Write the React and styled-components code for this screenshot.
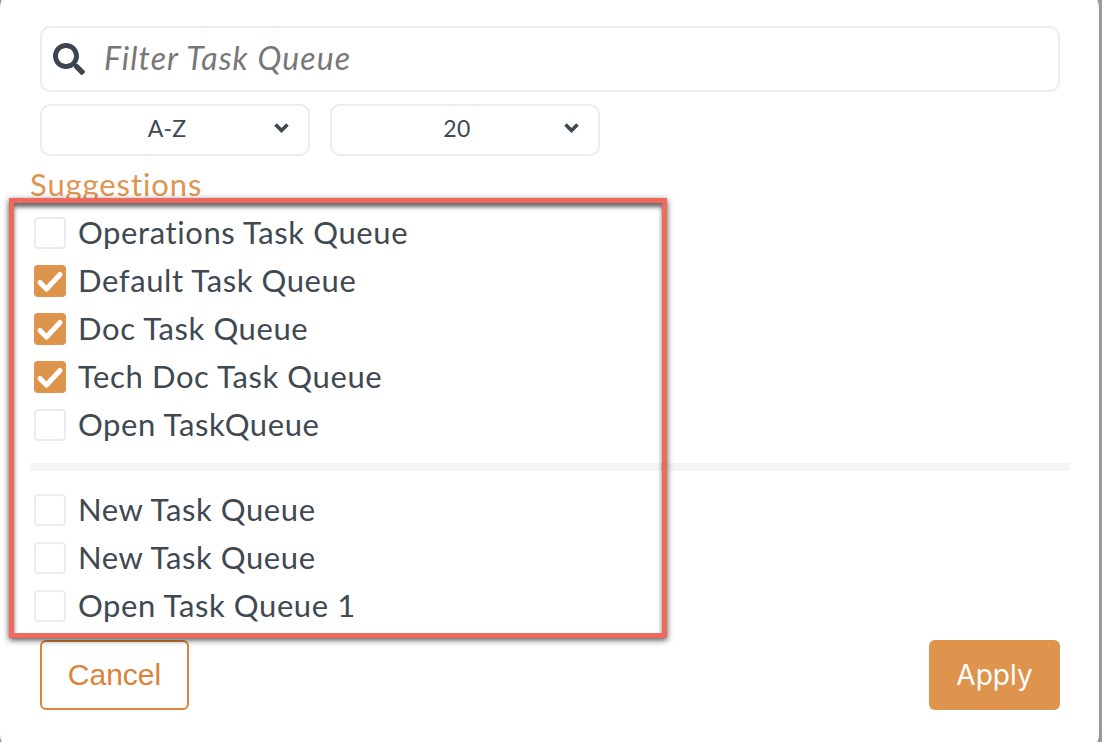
import React, { useState } from 'react';
import styled, { createGlobalStyle } from 'styled-components';
import { FaSearch } from 'react-icons/fa';

const GlobalStyle = createGlobalStyle`
  html, body {
    margin: 0;
    height: 100%;
    background: #9a9a9a;
    overflow: hidden;
  }
  * {
    box-sizing: border-box;
  }
`;

const groups = [
  [
    { id: 'ops', label: 'Operations Task Queue', checked: false },
    { id: 'default', label: 'Default Task Queue', checked: true },
    { id: 'doc', label: 'Doc Task Queue', checked: true },
    { id: 'tech', label: 'Tech Doc Task Queue', checked: true },
    { id: 'open', label: 'Open TaskQueue', checked: false },
  ],
  [
    { id: 'new1', label: 'New Task Queue', checked: false },
    { id: 'new2', label: 'New Task Queue', checked: false },
    { id: 'open1', label: 'Open Task Queue 1', checked: false },
  ],
];

const CheckMark = () => (
  <svg width="32" height="32" viewBox="0 0 32 32">
    <polyline
      points="6,17.5 12.5,24 26,9.5"
      fill="none"
      stroke="#fff"
      strokeWidth="5"
      strokeLinecap="round"
      strokeLinejoin="round"
    />
  </svg>
);

const Chevron = () => (
  <ChevronIcon width="15" height="10" viewBox="0 0 15 10">
    <polyline points="1.5,1.5 7.5,7.5 13.5,1.5" fill="none" stroke="#3f4952" strokeWidth="3.6" />
  </ChevronIcon>
);

const App = () => {
  const [filter, setFilter] = useState('');

  return (
    <Panel>
      <GlobalStyle />
      <SearchBox>
        <SearchIcon />
        <SearchInput
          placeholder="Filter Task Queue"
          value={filter}
          onChange={(e) => setFilter(e.target.value)}
        />
      </SearchBox>
      <Filters>
        <Dropdown>
          <span>A-Z</span>
          <Chevron />
        </Dropdown>
        <Dropdown>
          <span>20</span>
          <Chevron />
        </Dropdown>
      </Filters>
      <SectionTitle>Suggestions</SectionTitle>
      <ListArea>
        <Highlight />
        {groups.map((group, i) => (
          <React.Fragment key={i}>
            {i > 0 && <Divider />}
            {group.map(({ id, label, checked }) => (
              <Row key={id}>
                <CheckBox $checked={checked}>{checked && <CheckMark />}</CheckBox>
                <RowLabel>{label}</RowLabel>
              </Row>
            ))}
          </React.Fragment>
        ))}
      </ListArea>
      <Footer>
        <CancelButton>Cancel</CancelButton>
        <ApplyButton>Apply</ApplyButton>
      </Footer>
    </Panel>
  );
};

const Panel = styled.div`
  width: 1099px;
  height: 762px;
  margin-top: -10px;
  padding: 36px 29px 0 30px;
  background: #fff;
  border-radius: 18px;
  font-family: Lato, "Open Sans", sans-serif;
  color: #3f4952;
`;

const SearchBox = styled.div`
  display: flex;
  align-items: center;
  width: 1020px;
  height: 66px;
  margin-left: 10px;
  padding-left: 11px;
  border: 2px solid #ececec;
  border-radius: 10px;
`;

const SearchIcon = styled(FaSearch)`
  flex: none;
  width: 32px;
  height: 32px;
  color: #3b4650;
`;

const SearchInput = styled.input`
  flex: 1;
  min-width: 0;
  margin-left: 19px;
  padding: 0 0 3px;
  border: 0;
  outline: 0;
  background: transparent;
  font: italic 400 32px Lato, "Open Sans", sans-serif;
  letter-spacing: 1.1px;

  &::placeholder {
    color: #777;
    opacity: 1;
  }
`;

const Filters = styled.div`
  display: flex;
  gap: 20px;
  margin: 12px 0 0 10px;
`;

const Dropdown = styled.div`
  position: relative;
  display: flex;
  align-items: center;
  justify-content: center;
  width: 270px;
  height: 52px;
  padding: 0 16px 4px 0;
  border: 2px solid #ececec;
  border-radius: 10px;
  font-size: 23px;
  letter-spacing: 0.3px;
`;

const ChevronIcon = styled.svg`
  position: absolute;
  right: 19px;
  top: 17px;
`;

const SectionTitle = styled.div`
  height: 43px;
  margin-top: 10px;
  font-size: 31px;
  line-height: 36px;
  letter-spacing: 0.9px;
  color: #e0954f;
`;

const ListArea = styled.div`
  position: relative;
  width: 1040px;
  height: 431px;
`;

const Highlight = styled.div`
  position: absolute;
  z-index: 1;
  left: -21px;
  top: -11px;
  width: 658px;
  height: 440px;
  border: 5px solid #ee6a5c;
  box-shadow: 0 2px 6px rgba(0, 0, 0, 0.7), inset 0 4px 4px rgba(0, 0, 0, 0.6);
  pointer-events: none;
`;

const Row = styled.label`
  display: flex;
  align-items: center;
  height: 48px;
  padding-left: 4px;
`;

const CheckBox = styled.span`
  display: flex;
  align-items: center;
  justify-content: center;
  flex: none;
  width: 32px;
  height: 32px;
  border: ${({ $checked }) => ($checked ? '0' : '2px solid #ececec')};
  border-radius: 4px;
  background: ${({ $checked }) => ($checked ? '#de944d' : '#fff')};
`;

const RowLabel = styled.span`
  margin: 0 0 2px 12px;
  font-size: 31px;
  letter-spacing: 0.6px;
`;

const Divider = styled.div`
  height: 8px;
  margin: 14px 0 15px;
  background: #f5f5f5;
`;

const Footer = styled.div`
  display: flex;
  justify-content: space-between;
  width: 1020px;
  margin-left: 10px;
`;

const CancelButton = styled.button`
  width: 149px;
  height: 70px;
  border: 2px solid #dd8238;
  border-radius: 6px;
  background: #fff;
  font: 400 30px "Liberation Sans", Arial, sans-serif;
  color: #dd8238;
`;

const ApplyButton = styled.button`
  width: 131px;
  height: 70px;
  border: 0;
  border-radius: 6px;
  background: #de944d;
  font: 400 28px Inter, "Liberation Sans", sans-serif;
  color: #fff;
`;

export default App;
